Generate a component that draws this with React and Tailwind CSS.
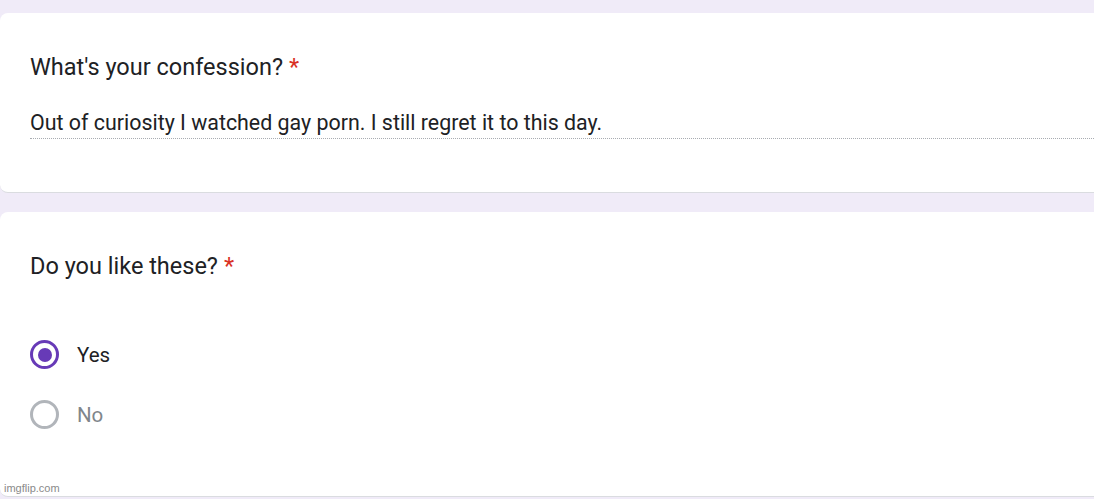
export default function App() {
    return (
        <div
            className="flex h-[499px] w-[1094px] flex-col overflow-hidden bg-[#f0ebf8] pt-[13px]"
            style={{ fontFamily: "Roboto, 'Liberation Sans', sans-serif" }}
        >
            {/* Question 1 */}
            <div className="h-[180px] shrink-0 rounded-l-lg border-b border-[#dadce0] bg-white pl-[30px] pt-[40px]">
                <div className="flex items-baseline text-[23.5px] leading-[28px] text-[#202124]">
                    <span>What's your confession?</span>
                    <span className="ml-[6px] text-[#d93025]">*</span>
                </div>
                <div className="mt-[30px] border-b border-dotted border-[#a8acb1] pb-[3px] text-[21.4px] leading-[24px] text-[#202124]">
                    Out of curiosity I watched gay porn. I still regret it to this day.
                </div>
            </div>

            {/* Question 2 */}
            <div className="relative mt-[19px] h-[285px] shrink-0 rounded-l-lg border-b border-[#dadce0] bg-white pl-[30px] pt-[40px]">
                <div className="flex items-baseline text-[23.5px] leading-[28px] text-[#202124]">
                    <span>Do you like these?</span>
                    <span className="ml-[6px] text-[#d93025]">*</span>
                </div>
                <div className="mt-[60px] flex flex-col gap-[31px]">
                    <div className="flex items-center">
                        <span className="flex h-[29px] w-[29px] items-center justify-center rounded-full border-[3px] border-[#673ab7]">
                            <span className="h-[14px] w-[14px] rounded-full bg-[#673ab7]" />
                        </span>
                        <span className="ml-[18px] text-[20.5px] leading-[26px] text-[#202124]">Yes</span>
                    </div>
                    <div className="flex items-center">
                        <span className="h-[29px] w-[29px] rounded-full border-[3px] border-[#b1b5ba]" />
                        <span className="ml-[18px] text-[20.5px] leading-[26px] text-[#80868b]">No</span>
                    </div>
                </div>
                <span
                    className="absolute bottom-[1px] left-[4px] text-[11px] leading-[14px] text-[#8a8a8a]"
                    style={{ fontFamily: "'Liberation Sans', Arial, sans-serif" }}
                >
                    imgflip.com
                </span>
            </div>
        </div>
    );
}
